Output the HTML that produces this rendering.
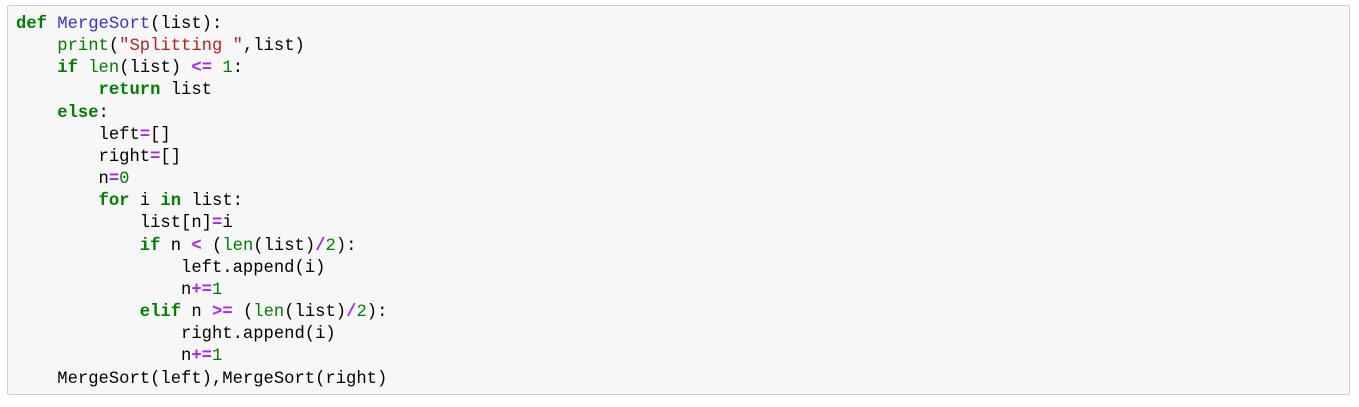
<!DOCTYPE html>
<html><head><style>
html,body{margin:0;padding:0;background:#fff;width:1359px;height:407px;overflow:hidden}
.cell{position:absolute;left:7px;top:5px;width:1343px;height:390px;background:#f7f7f7;border:1px solid #cfcfcf;border-radius:2px;box-sizing:border-box}
pre{position:absolute;left:8px;top:8px;margin:0;font-family:"Liberation Mono",monospace;font-size:17.2px;line-height:22.15px;color:#000}
.k{color:#008000;font-weight:bold}
.b{color:#008000}
.f{color:#3333dd}
.s{color:#ba2121}
.o{color:#aa22ff;font-weight:bold}
.n{color:#008000}
</style></head><body>
<div class="cell"><pre><span class="k">def</span> <span class="f">MergeSort</span>(list):
    <span class="b">print</span>(<span class="s">"Splitting "</span>,list)
    <span class="k">if</span> <span class="b">len</span>(list) <span class="o">&lt;=</span> <span class="n">1</span>:
        <span class="k">return</span> list
    <span class="k">else</span>:
        left<span class="o">=</span>[]
        right<span class="o">=</span>[]
        n<span class="o">=</span><span class="n">0</span>
        <span class="k">for</span> i <span class="k">in</span> list:
            list[n]<span class="o">=</span>i
            <span class="k">if</span> n <span class="o">&lt;</span> (<span class="b">len</span>(list)<span class="o">/</span><span class="n">2</span>):
                left.append(i)
                n<span class="o">+=</span><span class="n">1</span>
            <span class="k">elif</span> n <span class="o">&gt;=</span> (<span class="b">len</span>(list)<span class="o">/</span><span class="n">2</span>):
                right.append(i)
                n<span class="o">+=</span><span class="n">1</span>
    MergeSort(left),MergeSort(right)</pre></div>
</body></html>
